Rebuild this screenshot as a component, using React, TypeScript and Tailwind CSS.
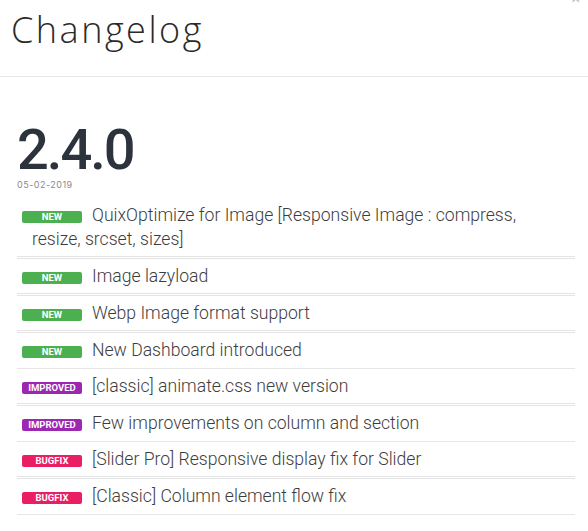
import React from "react";

type Kind = "new" | "improved" | "bugfix";

const badgeStyles: Record<Kind, string> = {
  new: "bg-[#4caf50]",
  improved: "bg-[#9c27b0]",
  bugfix: "bg-[#e91e63]",
};

const entries: { kind: Kind; text: string; double: boolean }[] = [
  { kind: "new", text: "QuixOptimize for Image [Responsive Image : compress, resize, srcset, sizes]", double: true },
  { kind: "new", text: "Image lazyload", double: true },
  { kind: "new", text: "Webp Image format support", double: true },
  { kind: "new", text: "New Dashboard introduced", double: false },
  { kind: "improved", text: "[classic] animate.css new version", double: true },
  { kind: "improved", text: "Few improvements on column and section", double: false },
  { kind: "bugfix", text: "[Slider Pro] Responsive display fix for Slider", double: true },
  { kind: "bugfix", text: "[Classic] Column element flow fix", double: false },
];

export default function App() {
  return (
    <div className="relative min-h-screen overflow-hidden bg-white font-['Roboto',sans-serif]">
      <span className="absolute right-[8px] top-[-9px] text-[16px] leading-none text-[#bbb]">×</span>

      <header className="h-[77px] border-b border-[#e6e6e6] pl-[11px] pt-[6px]">
        <h1 className="font-['Open_Sans',sans-serif] text-[36px] font-light leading-[48px] tracking-[2.5px] text-[#2a2a2a]">
          Changelog
        </h1>
      </header>

      <section className="px-[17px] pt-[46px]">
        <h2 className="font-['Roboto',sans-serif] text-[56px] font-medium leading-[54px] tracking-[-2px] text-[#2d333d]">
          2.4.0
        </h2>
        <p className="mt-[2px] font-['Inter',sans-serif] text-[9px] leading-[12px] tracking-[0.5px] text-[#8a8a8a]">
          05-02-2019
        </p>

        <ul className="mt-[7px] w-[558px]">
          {entries.map((entry, i) => (
            <li
              key={i}
              className={`pl-[15px] pr-[20px] pt-[5px] text-[17.6px] font-light leading-[24px] text-[#3d3d3d] ${
                entry.double
                  ? "border-b-[3px] border-double border-[#e4e4e4] pb-[5px]"
                  : "border-b border-[#e6e6e6] pb-[6px]"
              }`}
            >
              <span
                className={`relative top-[1px] -ml-[10px] mr-[10px] inline-block h-[12px] w-[60px] rounded-[2px] text-center align-middle font-['Roboto',sans-serif] text-[9.5px] font-bold uppercase leading-[12px] text-white ${
                  badgeStyles[entry.kind]
                }`}
              >
                {entry.kind}
              </span>
              {entry.text}
            </li>
          ))}
        </ul>
      </section>
    </div>
  );
}
